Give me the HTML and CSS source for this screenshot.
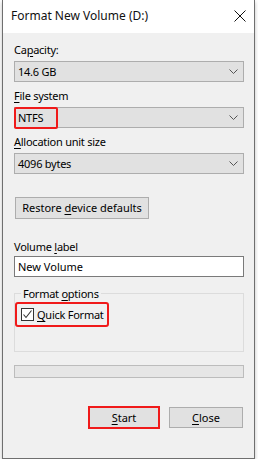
FILE: index.html
```html
<!DOCTYPE html>
<html lang="en">
<head>
    <meta charset="UTF-8" />
    <title>Format New Volume (D:)</title>
    <link rel="stylesheet" href="styles.css">
</head>
<body>
    <div class="window" role="dialog" aria-labelledby="dlg-title">
        <div class="titlebar">
            <span id="dlg-title" class="title">Format New Volume (D:)</span>
            <button class="close-x" aria-label="Close">
                <svg viewBox="0 0 12 12" width="12" height="12" aria-hidden="true">
                    <path d="M0.5 0.5 L11.5 11.5 M11.5 0.5 L0.5 11.5" stroke="#111" stroke-width="1" fill="none" />
                </svg>
            </button>
        </div>

        <div class="content">
            <div class="field-label">Ca<u>p</u>acity:</div>
            <div class="combo">
                <span>14.6 GB</span>
                <svg class="chev" viewBox="0 0 9 5" width="9" height="5" aria-hidden="true"><path d="M0.5 0.5 L4.5 4.5 L8.5 0.5" stroke="#555" fill="none" /></svg>
            </div>

            <div class="field-label"><u>F</u>ile system</div>
            <div class="combo combo-marked">
                <span>NTFS</span>
                <span class="mark" aria-hidden="true"></span>
                <svg class="chev" viewBox="0 0 9 5" width="9" height="5" aria-hidden="true"><path d="M0.5 0.5 L4.5 4.5 L8.5 0.5" stroke="#555" fill="none" /></svg>
            </div>

            <div class="field-label field-label-gap"><u>A</u>llocation unit size</div>
            <div class="combo">
                <span>4096 bytes</span>
                <svg class="chev" viewBox="0 0 9 5" width="9" height="5" aria-hidden="true"><path d="M0.5 0.5 L4.5 4.5 L8.5 0.5" stroke="#555" fill="none" /></svg>
            </div>

            <button class="btn btn-restore">Restore <u>d</u>evice defaults</button>

            <label class="field-label field-label-vol" for="vol-label">Volume <u>l</u>abel</label>
            <input class="text-input" id="vol-label" type="text" value="New Volume">

            <fieldset class="group">
                <legend>Format <u>o</u>ptions</legend>
                <label class="quick">
                    <svg class="check" viewBox="0 0 13 13" width="13" height="13" aria-hidden="true">
                        <rect x="0.5" y="0.5" width="12" height="12" fill="#fff" stroke="#333" />
                        <path d="M2.5 6.5 L5 9.5 L10.5 2.5" stroke="#333" stroke-width="1.1" fill="none" />
                    </svg>
                    <span><u>Q</u>uick Format</span>
                </label>
            </fieldset>

            <div class="progress"></div>

            <div class="actions">
                <button class="btn btn-start"><u>S</u>tart</button>
                <button class="btn btn-close"><u>C</u>lose</button>
            </div>
        </div>
    </div>
</body>
</html>
```

FILE: styles.css
```css
*, *::before, *::after {
    box-sizing: border-box;
}

body {
    margin: 0;
    background: #fff;
    font-family: "Noto Sans", "Open Sans", sans-serif;
    font-size: 11px;
    letter-spacing: -0.25px;
    color: #000;
}

u {
    text-decoration: underline;
    text-underline-offset: 2px;
}

.window {
    width: 253px;
    height: 459px;
    margin-left: 2px;
    background: #f0f0f0;
    border: 1px solid #6f6f6f;
    border-top: none;
    box-shadow: 0 2px 4px rgba(0, 0, 0, 0.25);
}

.titlebar {
    height: 33px;
    background: #fff;
    display: flex;
    align-items: center;
    justify-content: space-between;
    padding: 0 7px 2px 8px;
}

.title {
    font-size: 12px;
    letter-spacing: 0;
    color: #111;
}

.close-x {
    border: none;
    background: none;
    padding: 0;
    width: 14px;
    height: 14px;
    display: flex;
    align-items: center;
    justify-content: center;
}

.content {
    padding: 9px 10px 0 11px;
}

.field-label {
    display: block;
    height: 15px;
    line-height: 15px;
    margin-bottom: 4px;
}

.field-label-gap {
    margin-top: 1px;
}

.field-label-vol {
    margin-top: 20px;
    margin-bottom: 2px;
}

.combo {
    position: relative;
    height: 21px;
    background: #e1e1e1;
    border: 1px solid #adadad;
    display: flex;
    align-items: center;
    justify-content: space-between;
    padding: 0 5px 0 3px;
    margin-bottom: 6px;
}

.chev {
    display: block;
}

.mark {
    position: absolute;
    left: -1px;
    top: -1px;
    width: 44px;
    height: 22px;
    border: 2px solid #f01a1a;
    border-radius: 2px;
}

.btn {
    font: inherit;
    color: #000;
    background: #e1e1e1;
    border: 1px solid #adadad;
    padding: 0;
    line-height: 18px;
}

.btn-restore {
    display: block;
    width: 134px;
    height: 22px;
    margin: 23px 0 0 1px;
}

.text-input {
    display: block;
    width: 100%;
    height: 21px;
    font: inherit;
    color: #000;
    background: #fff;
    border: 1px solid #7a7a7a;
    padding: 0 3px;
    margin: 0;
}

.group {
    margin: 9px 0 0;
    padding: 0 0 24px;
    border: 1px solid #dcdcdc;
    min-width: 0;
}

.group legend {
    margin-left: 6px;
    padding: 0 2px;
    line-height: 15px;
}

.quick {
    display: flex;
    align-items: center;
    gap: 3px;
    width: 94px;
    height: 25px;
    margin-top: 1px;
    padding-left: 4px;
    border: 2px solid #f01a1a;
    border-radius: 3px;
}

.check {
    display: block;
    flex: none;
}

.progress {
    height: 13px;
    margin-top: 13px;
    background: #e6e6e6;
    border: 1px solid #bcbcbc;
}

.actions {
    display: flex;
    justify-content: flex-end;
    align-items: center;
    gap: 9px;
    margin-top: 28px;
    padding-right: 1px;
}

.btn-start {
    width: 72px;
    height: 23px;
    border: 2px solid #f01a1a;
}

.btn-close {
    width: 74px;
    height: 21px;
}
```
